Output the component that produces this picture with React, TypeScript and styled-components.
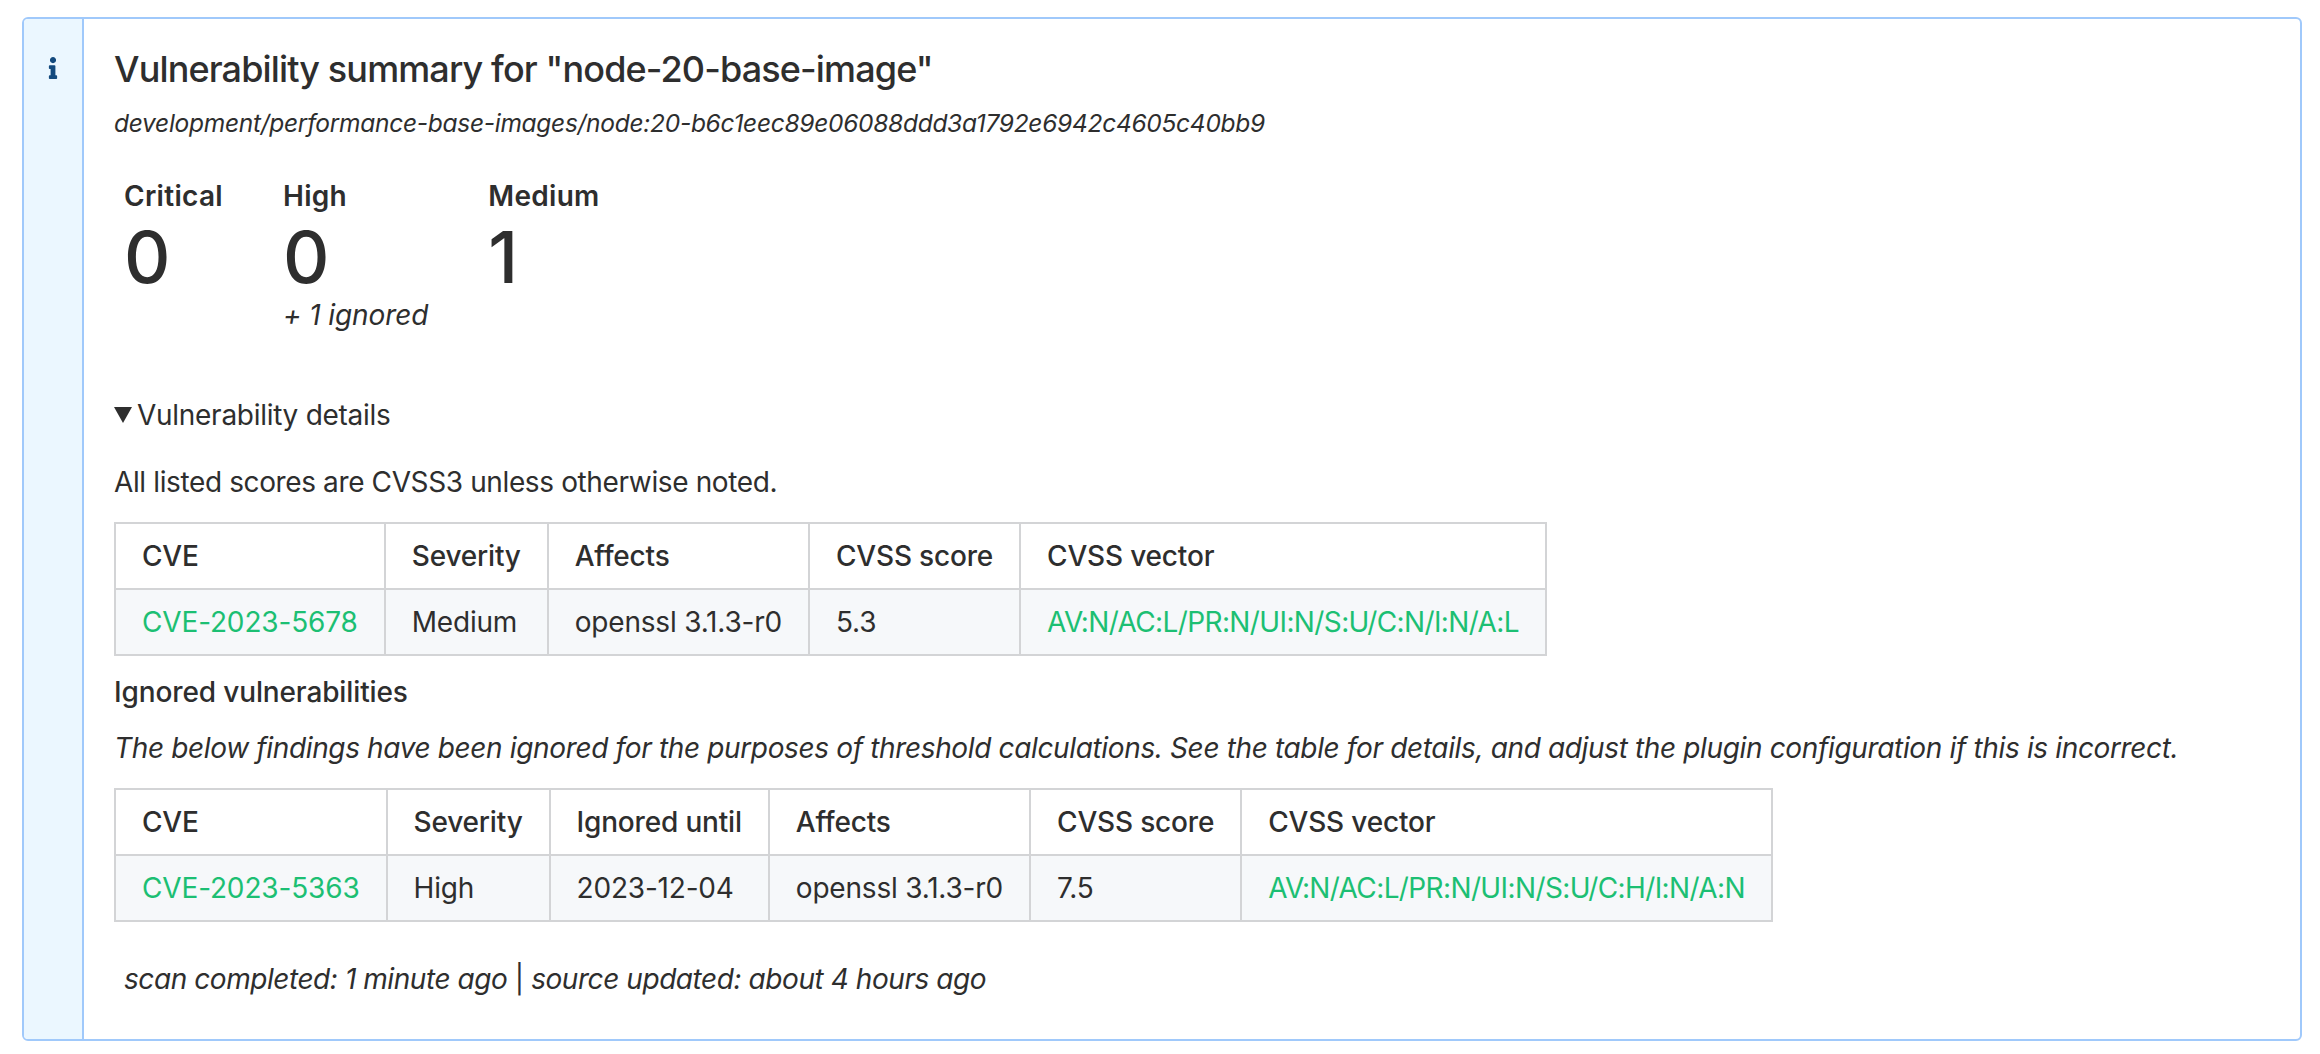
import * as React from 'react';
import styled, { createGlobalStyle } from 'styled-components';
import { FaInfo } from 'react-icons/fa';

const GlobalStyle = createGlobalStyle`
  html, body {
    margin: 0;
    padding: 0;
    background: #fff;
  }
  body {
    font-family: Inter, "Noto Sans", sans-serif;
    font-size: 28px;
    line-height: 40px;
    color: #2e2e2e;
  }
`;

const Page = styled.div`
  padding: 17px 18px 13px 22px;
`;

const Callout = styled.div`
  display: flex;
  height: 1024px;
  box-sizing: border-box;
  border: 2px solid #a0c9fb;
  border-radius: 6px;
  overflow: hidden;
`;

const IconColumn = styled.div`
  flex: 0 0 60px;
  box-sizing: border-box;
  display: flex;
  justify-content: center;
  padding-top: 38px;
  background: #ebf7ff;
  border-right: 2px solid #a0c9fb;
  color: #134a7e;
  font-size: 22px;
  line-height: 22px;
`;

const Body = styled.div`
  flex: 1;
  padding: 28px 30px 0 30px;
`;

const Title = styled.h2`
  margin: 0;
  font-size: 36px;
  line-height: 44px;
  font-weight: 500;
  letter-spacing: -0.87px;
`;

const ImageName = styled.div`
  margin-top: 17px;
  font-size: 24.5px;
  line-height: 30px;
  font-style: italic;
  letter-spacing: -0.28px;
`;

const Stats = styled.div`
  display: flex;
  gap: 60px;
  margin: 38px 0 0 10px;
`;

const Stat = styled.div`
  display: flex;
  flex-direction: column;
`;

const StatLabel = styled.div`
  font-weight: 600;
  line-height: 40px;
  letter-spacing: 0.3px;
`;

const StatValue = styled.div`
  margin-top: 1px;
  font-size: 72px;
  line-height: 80px;
  font-weight: 500;
`;

const StatNote = styled.div`
  font-style: italic;
  line-height: 36px;
  letter-spacing: -0.1px;
`;

const Details = styled.details`
  margin-top: 62px;
`;

const Summary = styled.summary`
  display: flex;
  align-items: center;
  gap: 5px;
  line-height: 40px;
  letter-spacing: -0.28px;
  list-style: none;

  &::before {
    content: '';
    width: 0;
    height: 0;
    border-left: 9.5px solid transparent;
    border-right: 9.5px solid transparent;
    border-top: 16px solid #2e2e2e;
  }
`;

const Note = styled.p`
  margin: 27px 0 20px;
  line-height: 40px;
  letter-spacing: -0.38px;
`;

const Table = styled.table`
  border-collapse: collapse;
  line-height: 40px;
`;

const HeadCell = styled.th`
  padding: 12px 26px;
  border: 2px solid #d3d4d6;
  background: #fff;
  font-weight: 500;
  text-align: left;
  white-space: nowrap;
  letter-spacing: -0.18px;
`;

const Cell = styled.td`
  padding: 12px 26px;
  border: 2px solid #d3d4d6;
  background: #f6f8fa;
  white-space: nowrap;
  letter-spacing: -0.2px;
`;

const Link = styled.a<{ $tight?: boolean }>`
  color: #1cbf73;
  text-decoration: none;
  letter-spacing: ${props => (props.$tight ? '-0.62px' : '-0.15px')};
`;

const SubHeading = styled.div`
  margin-top: 16px;
  font-weight: 500;
  line-height: 40px;
  letter-spacing: -0.13px;
`;

const Explanation = styled.p`
  margin: 16px 0 20px;
  font-style: italic;
  line-height: 40px;
  letter-spacing: -0.36px;
`;

const Footer = styled.p`
  margin: 37px 0 0 10px;
  font-style: italic;
  line-height: 40px;
  letter-spacing: -0.44px;
`;

const Separator = styled.span`
  font-style: normal;
`;

type Finding = {
  cve: string;
  severity: string;
  ignoredUntil?: string;
  affects: string;
  score: string;
  vector: string;
};

function FindingsTable({ finding }: { finding: Finding }) {
  const ignored = finding.ignoredUntil !== undefined;
  return (
    <Table>
      <thead>
        <tr>
          <HeadCell>CVE</HeadCell>
          <HeadCell>Severity</HeadCell>
          {ignored && <HeadCell>Ignored until</HeadCell>}
          <HeadCell>Affects</HeadCell>
          <HeadCell>CVSS score</HeadCell>
          <HeadCell>CVSS vector</HeadCell>
        </tr>
      </thead>
      <tbody>
        <tr>
          <Cell>
            <Link href="#">{finding.cve}</Link>
          </Cell>
          <Cell>{finding.severity}</Cell>
          {ignored && <Cell>{finding.ignoredUntil}</Cell>}
          <Cell>{finding.affects}</Cell>
          <Cell>{finding.score}</Cell>
          <Cell>
            <Link href="#" $tight>
              {finding.vector}
            </Link>
          </Cell>
        </tr>
      </tbody>
    </Table>
  );
}

export default function App() {
  return (
    <>
      <GlobalStyle />
      <Page>
        <Callout>
          <IconColumn>
            <FaInfo />
          </IconColumn>
          <Body>
            <Title>Vulnerability summary for "node-20-base-image"</Title>
            <ImageName>
              development/performance-base-images/node:20-b6c1eec89e06088ddd3a1792e6942c4605c40bb9
            </ImageName>
            <Stats>
              <Stat>
                <StatLabel>Critical</StatLabel>
                <StatValue>0</StatValue>
              </Stat>
              <Stat>
                <StatLabel>High</StatLabel>
                <StatValue>0</StatValue>
                <StatNote>+ 1 ignored</StatNote>
              </Stat>
              <Stat>
                <StatLabel>Medium</StatLabel>
                <StatValue>1</StatValue>
              </Stat>
            </Stats>
            <Details open>
              <Summary>Vulnerability details</Summary>
              <Note>All listed scores are CVSS3 unless otherwise noted.</Note>
              <FindingsTable
                finding={{
                  cve: 'CVE-2023-5678',
                  severity: 'Medium',
                  affects: 'openssl 3.1.3-r0',
                  score: '5.3',
                  vector: 'AV:N/AC:L/PR:N/UI:N/S:U/C:N/I:N/A:L',
                }}
              />
              <SubHeading>Ignored vulnerabilities</SubHeading>
              <Explanation>
                The below findings have been ignored for the purposes of threshold calculations. See the table for
                details, and adjust the plugin configuration if this is incorrect.
              </Explanation>
              <FindingsTable
                finding={{
                  cve: 'CVE-2023-5363',
                  severity: 'High',
                  ignoredUntil: '2023-12-04',
                  affects: 'openssl 3.1.3-r0',
                  score: '7.5',
                  vector: 'AV:N/AC:L/PR:N/UI:N/S:U/C:H/I:N/A:N',
                }}
              />
            </Details>
            <Footer>
              scan completed: 1 minute ago <Separator>|</Separator> source updated: about 4 hours ago
            </Footer>
          </Body>
        </Callout>
      </Page>
    </>
  );
}
